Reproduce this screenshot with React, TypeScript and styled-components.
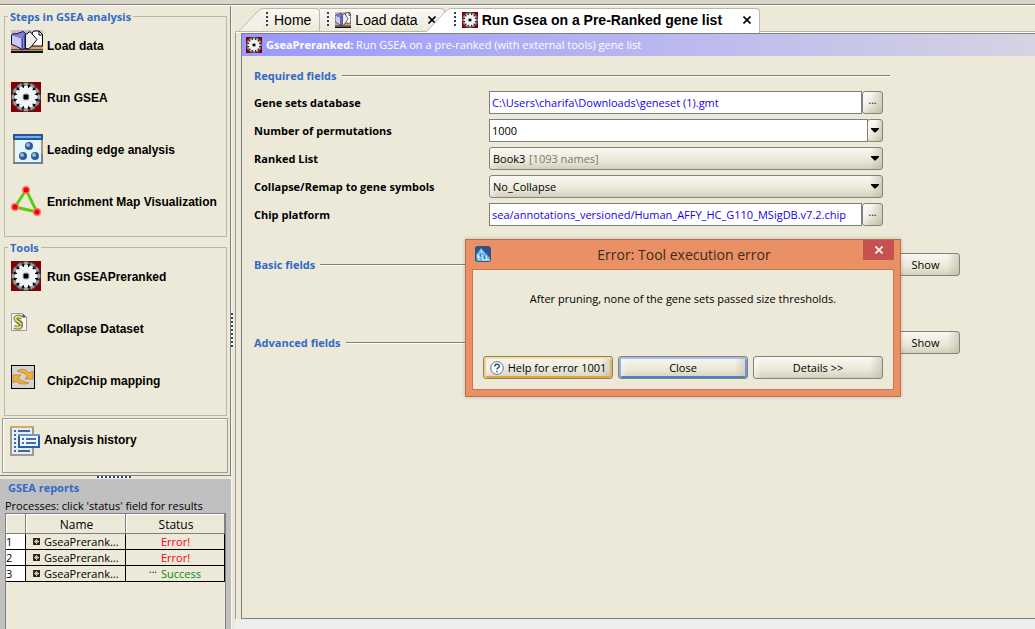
import React from "react";
import styled, { createGlobalStyle, css } from "styled-components";

const BG = "#ece9d8";
const LINE = "#b9b9a8";
const DARK = "#7f7f7f";
const BLUE = "#3169c6";
const UI = `"Open Sans", "Noto Sans", sans-serif`;
const ARIAL = `"Liberation Sans", Arial, sans-serif`;

const Global = createGlobalStyle`
  *, *::before, *::after { box-sizing: border-box; }
  body { margin: 0; background: ${BG}; color: #000; font: 12px/16px ${UI}; }
  button, input, select { font: inherit; color: inherit; margin: 0; }
  h1, h2, p, ul, fieldset { margin: 0; padding: 0; }
  svg { display: block; flex: none; }
`;

const Page = styled.div`
  min-height: 100vh;
  display: flex;
  flex-direction: column;
  position: relative;
  overflow: hidden;
`;
const TopStrip = styled.div`
  height: 5px;
  background: #dad6c8;
  border-bottom: 1px solid ${DARK};
`;
const Columns = styled.div`
  flex: 1;
  display: flex;
  border-top: 1px solid #fff;
`;
const Sidebar = styled.aside`
  flex: none;
  width: 231px;
  display: flex;
  flex-direction: column;
`;
const Steps = styled.div`
  display: flex;
  flex-direction: column;
  border: solid ${DARK};
  border-width: 0 1px 1px 0;
  padding: 10px 2px 2px 2px;
`;
const Group = styled.section`
  margin: 0 1px 10px 2px;
  border: 1px solid ${LINE};
`;
const Title = styled.h2`
  display: table;
  margin: -8px 0 5px 3px;
  padding: 0 2px;
  background: ${BG};
  color: ${BLUE};
  font: bold 11px/16px ${UI};
`;
const Tool = styled.button<{ $boxed?: boolean }>`
  display: flex;
  align-items: flex-start;
  width: 100%;
  height: 52px;
  border: 0;
  padding: ${(p) => (p.$boxed ? "7px 0 0 7px" : "0 0 0 6px")};
  background: none;
  text-align: left;
  font: bold 12px/${(p) => (p.$boxed ? 28 : 32)}px ${ARIAL};
  &:last-child { height: 50px; }
`;
const ToolIcon = styled.span<{ $boxed?: boolean }>`
  width: ${(p) => (p.$boxed ? 34 : 36)}px;
  flex: none;
`;
const History = styled.div`
  margin-top: -8px;
  border: 1px solid #9c9c90;
  box-shadow: inset 1px 1px 0 #fff;
  height: 55px;
`;
const GripH = styled.div`
  height: 3px;
  padding-left: 97px;
  &::before {
    content: "";
    display: block;
    width: 35px;
    height: 2px;
    background: repeating-linear-gradient(90deg, #29406b 0 2px, #fff 2px 4px);
  }
`;
const Reports = styled.section`
  flex: 1;
  display: flex;
  flex-direction: column;
  background: #c0c0c0;
  padding: 1px 5px 0;
`;
const ReportTitle = styled.h2`
  padding-left: 3px;
  color: ${BLUE};
  font: bold 11px/16px ${UI};
`;
const ReportNote = styled.p`
  font-size: 11px;
  line-height: 15px;
  padding: 2px 0 0;
`;
const TableBox = styled.div`
  flex: 1;
  border: 1px solid ${DARK};
  border-bottom: 0;
  background: ${BG};
`;
const Table = styled.table`
  border-collapse: separate;
  border-spacing: 0;
  table-layout: fixed;
  width: 100%;
  font: 11px/15px ${UI};
  th, td { padding: 0; height: 16px; border: solid #000; border-width: 0 1px 1px 0; white-space: nowrap; }
  th { height: 20px; padding: 2px 0 0 2px; font-weight: normal; font-size: 12px; border-color: ${DARK}; box-shadow: inset 1px 1px 0 #fff; }
`;
const Num = styled.td`
  background: #fff;
`;
const NameCell = styled.div`
  display: flex;
  align-items: center;
  gap: 4px;
  padding-left: 7px;
`;
const Status = styled.td<{ $ok?: boolean }>`
  color: ${(p) => (p.$ok ? "#0a8a0a" : "#f5001d")};
`;
const StatusInner = styled.div`
  display: grid;
  grid-template-columns: 35px 1fr;
  line-height: 15px;
`;
const Dots = styled.span`
  color: #000;
  text-align: right;
  padding-right: 4px;
  font-size: 10px;
  line-height: 6px;
`;
const Splitter = styled.div`
  flex: none;
  width: 4px;
  background: linear-gradient(90deg, #f6f5ec 1px, ${BG} 1px);
  padding-top: 307px;
  &::before {
    content: "";
    display: block;
    width: 2px;
    height: 35px;
    background: repeating-linear-gradient(#29406b 0 2px, #fff 2px 4px);
  }
`;
const Main = styled.main`
  flex: 1;
  min-width: 0;
  display: flex;
  flex-direction: column;
`;
const Tabs = styled.nav`
  display: flex;
  align-items: flex-start;
  height: 26px;
  padding: 2px 0 0 4px;
  border-bottom: 1px solid ${LINE};
`;
const TabShell = styled.div<{ $active?: boolean }>`
  display: flex;
  position: relative;
  height: ${(p) => (p.$active ? 25 : 23)}px;
  margin-left: ${(p) => (p.$active ? -18 : 0)}px;
  font: ${(p) => (p.$active ? "bold" : "normal")} 14px/22px ${ARIAL};
`;
const TabFace = styled.div<{ $active?: boolean; $slope?: boolean }>`
  display: flex;
  align-items: flex-start;
  border: solid ${LINE};
  border-width: 1px 1px 0 0;
  border-radius: 0 4px 0 0;
  padding: ${(p) => (p.$slope ? "0 8px 0 3px" : "0 8px 0 7px")};
  background: ${(p) => (p.$active ? "#fff" : `linear-gradient(#faf9f4, ${BG})`)};
`;
const Grip = styled.span`
  width: 2px;
  height: 14px;
  margin: 3px 6px 0 0;
  background: repeating-linear-gradient(#29406b 0 2px, transparent 2px 4px);
`;
const TabLabel = styled.button`
  display: flex;
  align-items: center;
  gap: 4px;
  border: 0;
  padding: 0;
  background: none;
  white-space: nowrap;
`;
const TabClose = styled.button<{ $active?: boolean }>`
  border: 0;
  padding: 7px 0;
  margin-left: ${(p) => (p.$active ? 21 : 10)}px;
  background: none;
`;
const Frame = styled.div`
  flex: 1;
  display: flex;
  border-left: 1px solid #9c9c90;
  padding-left: 5px;
  background: ${BG};
  border-top: 1px solid #fff;
`;
const Sheet = styled.div`
  flex: 1;
  min-width: 0;
  border: solid ${DARK};
  border-width: 1px 0 1px 1px;
`;
const Bottom = styled.div`
  height: 10px;
  background: #eeeeee;
`;
const Banner = styled.h1`
  display: flex;
  align-items: center;
  height: 22px;
  padding-left: 4px;
  gap: 4px;
  color: #fff;
  font: 11px/22px ${UI};
  background: linear-gradient(90deg, #9999ff, #d6d3e2);
`;
const Form = styled.form`
  max-width: 718px;
  padding: 8px 0 0 12px;
`;
const Section = styled.div<{ $gap: number; $inset?: boolean }>`
  display: flex;
  align-items: center;
  gap: 5px;
  height: 23px;
  margin-top: ${(p) => p.$gap}px;
  padding-right: ${(p) => (p.$inset ? 70 : 0)}px;
`;
const SectionTitle = styled.h2`
  color: ${BLUE};
  font: bold 11px/16px ${UI};
  white-space: nowrap;
`;
const Rule = styled.span`
  flex: 1;
  height: 2px;
  border-top: 1px solid ${DARK};
  background: #fff;
`;
const Fields = styled.div`
  display: grid;
  grid-template-columns: 235px 394px;
  row-gap: 5px;
  margin-top: 4px;
`;
const Label = styled.label`
  font: bold 11px/23px ${UI};
`;
const Control = styled.div`
  display: flex;
  height: 23px;
`;
const button = css`
  border: 1px solid #838378;
  border-radius: 3px;
  background: linear-gradient(90deg, #fff8 0, transparent 8px calc(100% - 12px), #b5b29a88 100%),
    linear-gradient(#f9f8f3, #e9e6d6 65%, #d2cfbd);
`;
const Input = styled.input<{ $path?: boolean }>`
  flex: 1;
  min-width: 0;
  border: 1px solid ${DARK};
  border-radius: 0;
  padding: 0 2px;
  background: #fff;
  color: ${(p) => (p.$path ? "#1500f0" : "#000")};
  font-size: 11px;
  outline: 0;
`;
const Browse = styled.button`
  ${button}
  flex: none;
  width: 21px;
  padding: 0 0 6px;
  font-size: 10px;
  line-height: 14px;
`;
const Drop = styled.button`
  ${button}
  flex: none;
  width: 16px;
  margin-left: -1px;
  padding: 0 3px;
`;
const SelectBox = styled.div`
  flex: 1;
  display: grid;
  grid-template-columns: 1fr 20px;
  align-items: center;
`;
const Select = styled.select`
  ${button}
  grid-area: 1 / 1 / 2 / 3;
  height: 23px;
  width: 100%;
  padding: 0 3px;
  appearance: none;
  font-size: 11px;
`;
const Hint = styled.span`
  grid-area: 1 / 1;
  padding-left: 40px;
  color: #77776c;
  font-size: 11px;
  pointer-events: none;
`;
const Caret = styled.span`
  grid-area: 1 / 2;
  padding-left: 8px;
  pointer-events: none;
`;
const Push = styled.button<{ $tone?: "gold" | "blue"; $wide?: boolean }>`
  ${button}
  height: 23px;
  ${(p) => (p.$wide ? "flex: 1;" : "width: 69px; flex: none;")}
  display: flex;
  align-items: center;
  justify-content: center;
  gap: 4px;
  padding: 0;
  font-size: 11px;
  line-height: 16px;
  white-space: nowrap;
  ${(p) => p.$tone === "gold" && "box-shadow: inset 0 2px #fbdd9c, inset 2px 0 #f5cf83, inset -2px 0 #e6b35a, inset 0 -2px #e9a42d;"}
  ${(p) => p.$tone === "blue" && "box-shadow: inset 0 2px #a9c0ea, inset 2px 0 #93b0e0, inset -2px 0 #7298d6, inset 0 -2px #4f7ecb;"}
`;
const Dialog = styled.section`
  position: absolute;
  left: 465px;
  top: 239px;
  width: 436px;
  border: 1px solid #b86f4d;
  background: #e99065;
  padding: 0 6px 6px;
  box-shadow: 0 0 4px #0003;
`;
const DialogHead = styled.header`
  display: grid;
  grid-template-columns: 30px 1fr 31px;
  height: 29px;
  padding-left: 3px;
`;
const DialogIcon = styled.span`
  padding-top: 6px;
`;
const DialogTitle = styled.h2`
  text-align: center;
  font: 14px/30px ${UI};
  color: #3b2a22;
`;
const DialogClose = styled.button`
  width: 31px;
  height: 20px;
  border: 0;
  padding: 0 12px;
  background: #c75050;
`;
const DialogBody = styled.div`
  border: 1px solid #c87850;
  background: ${BG};
  padding: 21px 10px 10px;
`;
const Message = styled.p`
  text-align: center;
  font-size: 11px;
  line-height: 16px;
`;
const Actions = styled.div`
  display: flex;
  gap: 5px;
  margin-top: 49px;
`;

const TWELFTHS = Array.from({ length: 12 }, (_, i) => i * 30);
const GearIcon = ({ size }: { size: number }) => (
  <svg width={size} height={size} viewBox="0 0 30 30" aria-hidden="true">
    <rect width="30" height="30" fill="#850005" />
    <g fill="#a6a6a6" stroke="#4a4a4a">
      {TWELFTHS.map((a) => (
        <rect key={a} x="12" y=".5" width="6" height="6" rx="2" transform={`rotate(${a} 15 15)`} />
      ))}
    </g>
    <circle cx="15" cy="15" r="12.500" fill="#8f8f8f" />
    <g fill="#0c0c0c">
      {TWELFTHS.map((a) => (
        <rect key={a} x="13.500" y="2.500" width="3" height="4" rx="1" transform={`rotate(${a + 15} 15 15)`} />
      ))}
    </g>
    <g fill="#f0f6f7">
      {TWELFTHS.map((a) => (
        <rect key={a} x="13" y="3.500" width="4" height="5" rx="1.500" transform={`rotate(${a} 15 15)`} />
      ))}
      <circle cx="15" cy="15" r="9.500" />
    </g>
    <circle cx="15" cy="15" r="4" fill="#ccd4d8" />
    <rect x="12.500" y="12.500" width="5" height="5" rx="1" fill="#000" />
  </svg>
);
const BooksIcon = ({ small }: { small?: boolean }) => (
  <svg width={small ? 16 : 32} height={small ? 16 : 23} viewBox="0 0 32 23" preserveAspectRatio="none" aria-hidden="true">
    <rect width="32" height="17" fill="#cbb9cc" />
    <rect y="16" width="32" height="4" fill="#e0a06c" />
    <rect y="19" width="32" height="1" fill="#6d4a34" />
    <rect y="20" width="32" height="2" fill="#8d8d8d" />
    <rect y="21" width="32" height="2" fill="#111" />
    <path d="M21 3l2-2h5l3.500 3.500V16H21z" fill="#fff" stroke="#000" />
    <path d="M28 1v4h3" fill="none" stroke="#000" />
    <path d="M14 5l5-3.500 7 8L20 17l-3 2-3-1z" fill="#ececec" stroke="#000" />
    <path d="M.5 5L3 3.500 5 4l7-2.500 2.500 2V18L11 19.500 5 16 .5 14.500z" fill="#8080d0" stroke="#111136" />
    <path d="M1 5.500l9 3V18l-5-2.500-4-2z" fill="#c9c9ff" />
    <path d="M11 8l3-4v13.500L11 19z" fill="#4c4c9e" />
    <path d="M12.500 7v11" stroke="#9a9ae6" strokeWidth=".8" />
  </svg>
);
const LeadingIcon = () => (
  <svg width="32" height="30" viewBox="0 0 32 30" aria-hidden="true">
    <rect x="3" y="1" width="28" height="28" fill="#e6f4fc" stroke="#6d7f9c" strokeWidth="2" />
    <path d="M3 5v23M31 6v14" stroke="#a39a7c" strokeWidth="2" />
    <rect x="2" width="30" height="6" fill="#2a5595" />
    <rect x="4" y="2" width="26" height="2" fill="#6eb0e8" />
    {[[18, 12], [12, 22], [24, 22]].map(([x, y]) => (
      <g key={x}>
        <circle cx={x} cy={y} r="4" fill="#2e5c98" />
        <circle cx={x - 1} cy={y - 1} r="2" fill="#8db9e4" />
      </g>
    ))}
  </svg>
);
const MapIcon = () => (
  <svg width="30" height="31" viewBox="0 0 30 31" aria-hidden="true">
    <path d="M15 4L26 26L4 21z" fill="none" stroke="#5fcb0b" strokeWidth="3" />
    {[[15, 4], [26, 26], [4, 21]].map(([x, y]) => (
      <g key={x}>
        <circle cx={x} cy={y} r="4" fill="#ff6a6a" />
        <circle cx={x} cy={y} r="2.500" fill="#f00000" />
      </g>
    ))}
  </svg>
);
const ScrollIcon = () => (
  <svg width="16" height="18" viewBox="0 0 16 18" aria-hidden="true">
    <path d="M.5.5h11l4 4v13H.5z" fill="#f6f6f2" stroke="#999" />
    <path d="M11.500.5v4h4z" fill="#555" />
    <path d="M11 5c-4-3-8-1-6 2s5 2 5 5-3 3-7 2" fill="none" stroke="#77773a" strokeWidth="4" />
    <path d="M11 5c-4-3-8-1-6 2s5 2 5 5-3 3-7 2" fill="none" stroke="#e6e070" strokeWidth="2" />
    <path d="M6 5l6 5M5 9l6 4" stroke="#55553a" strokeWidth=".8" />
  </svg>
);
const ChipIcon = () => (
  <svg width="24" height="24" viewBox="0 0 24 24" aria-hidden="true">
    <rect x=".5" y=".5" width="23" height="23" fill="#d3d3d6" stroke="#000" />
    <path d="M6 6c5-3 9-2 12 2l4-2v8h-8l2.500-3C14 8 10 7 6 6z" fill="#f0b03a" stroke="#b98226" strokeWidth=".8" />
    <path d="M18 18c-5 2-10 1-13-2l-3 2v-8h8l-3 3C10 16 14 17 18 18z" fill="#f0b03a" stroke="#b98226" strokeWidth=".8" />
  </svg>
);
const HistoryIcon = () => (
  <svg width="30" height="30" viewBox="0 0 30 30" aria-hidden="true">
    <rect x="1" y="1" width="22" height="28" fill="#e4edfa" stroke="#a09a86" strokeWidth="2" />
    <path d="M0 1h24" stroke="#c9ad63" strokeWidth="2" />
    <path d="M4 5h2M8 5h12M4 9h2M8 9h4M4 13h2M4 17h2M4 21h2M4 25h2M8 25h12M8 21h4" stroke="#42659f" strokeWidth="2" />
    <rect x="9" y="9" width="20" height="12" fill="#f2f7ff" stroke="#2464a6" strokeWidth="2" />
    <path d="M8 9h22" stroke="#7096cd" strokeWidth="2" />
    <path d="M12 13h2M16 13h10M12 17h2M16 17h10" stroke="#4a6da8" strokeWidth="2" />
  </svg>
);
const AppIcon = () => (
  <svg width="16" height="16" viewBox="0 0 16 16" aria-hidden="true">
    <rect width="16" height="16" rx="3" fill="#2f5288" />
    <path d="M1 9L6 2l9 10v3H2z" fill="#69b7e8" />
    <path d="M6 4l1 3M3 8l1 6M7 9l1 4M11 10l1 4M2 11h4M7 14h7" stroke="#e2f4ff" />
    <path d="M5 8l1 3M9 10l1 3" stroke="#2f6eac" />
  </svg>
);
const ExpandIcon = () => (
  <svg width="7" height="7" viewBox="0 0 7 7" aria-hidden="true">
    <rect width="7" height="7" fill="#33251a" />
    <path d="M3.500 1v5M1 3.500h5M2 2l3 3M5 2L2 5" stroke="#e8dcc2" strokeWidth=".8" />
  </svg>
);
const Cross = ({ color = "#000" }: { color?: string }) => (
  <svg width="8" height="8" viewBox="0 0 8 8" aria-hidden="true">
    <path d="M.5.5l7 7M7.500.5l-7 7" stroke={color} strokeWidth="1.600" />
  </svg>
);
const Arrow = () => (
  <svg width="8" height="5" viewBox="0 0 8 5" aria-hidden="true">
    <path d="M0 0h8v1L4.500 4.500h-1L0 1z" fill="#000" />
  </svg>
);
const HelpIcon = () => (
  <svg width="14" height="14" viewBox="0 0 14 14" aria-hidden="true">
    <circle cx="7" cy="7" r="6.300" fill="#fff" stroke="#5b7290" />
    <path d="M4.800 5.500c0-3 4.500-3 4.500-.3C9.300 7 7 6.800 7 8.600M7 9.800v1.500" fill="none" stroke="#3d4f78" strokeWidth="1.500" />
  </svg>
);
const Slope = ({ active }: { active?: boolean }) => (
  <svg width="24" height={active ? 25 : 23} viewBox={active ? "0 0 24 25" : "0 0 24 23"} aria-hidden="true">
    <path d={active ? "M0 25V23L18 4Q21 .5 24 .5V25z" : "M0 23L18 4Q21 .5 24 .5V23z"} fill={active ? "#fff" : "#f3f1e6"} />
    <path d="M0 23L18 4Q21 .5 24 .5" fill="none" stroke={LINE} />
  </svg>
);

const steps = [
  { label: "Load data", icon: <BooksIcon /> },
  { label: "Run GSEA", icon: <GearIcon size={30} /> },
  { label: "Leading edge analysis", icon: <LeadingIcon /> },
  { label: "Enrichment Map Visualization", icon: <MapIcon /> },
];
const tools = [
  { label: "Run GSEAPreranked", icon: <GearIcon size={30} /> },
  { label: "Collapse Dataset", icon: <ScrollIcon /> },
  { label: "Chip2Chip mapping", icon: <ChipIcon /> },
];
const reports = [{ ok: false }, { ok: false }, { ok: true }];

function ToolList({ items }: { items: typeof steps }) {
  return (
    <>
      {items.map((t) => (
        <Tool key={t.label} type="button">
          <ToolIcon>{t.icon}</ToolIcon>
          {t.label}
        </Tool>
      ))}
    </>
  );
}

function Tab(props: { label: string; icon?: React.ReactNode; slope?: boolean; active?: boolean; closable?: boolean }) {
  const { label, icon, slope, active, closable } = props;
  return (
    <TabShell $active={active}>
      {slope && <Slope active={active} />}
      <TabFace $active={active} $slope={slope}>
        <Grip />
        <TabLabel type="button">
          {icon}
          {label}
        </TabLabel>
        {closable && (
          <TabClose type="button" $active={active} aria-label={`Close ${label}`}>
            <Cross />
          </TabClose>
        )}
      </TabFace>
    </TabShell>
  );
}

export default function App() {
  return (
    <Page>
      <Global />
      <TopStrip />
      <Columns>
        <Sidebar>
          <Steps>
            <Group>
              <Title>Steps in GSEA analysis</Title>
              <ToolList items={steps} />
            </Group>
            <Group>
              <Title>Tools</Title>
              <ToolList items={tools} />
            </Group>
            <History>
              <Tool type="button" $boxed>
                <ToolIcon $boxed>
                  <HistoryIcon />
                </ToolIcon>
                Analysis history
              </Tool>
            </History>
          </Steps>
          <GripH />
          <Reports>
            <ReportTitle>GSEA reports</ReportTitle>
            <ReportNote>Processes: click 'status' field for results</ReportNote>
            <TableBox>
              <Table>
                <colgroup>
                  <col width="20" />
                  <col width="100" />
                  <col />
                </colgroup>
                <thead>
                  <tr>
                    <th />
                    <th>Name</th>
                    <th>Status</th>
                  </tr>
                </thead>
                <tbody>
                  {reports.map((r, i) => (
                    <tr key={i}>
                      <Num>{i + 1}</Num>
                      <td>
                        <NameCell>
                          <ExpandIcon />
                          GseaPrerank...
                        </NameCell>
                      </td>
                      <Status $ok={r.ok}>
                        <StatusInner>
                          <Dots>{r.ok ? "..." : ""}</Dots>
                          {r.ok ? "Success" : "Error!"}
                        </StatusInner>
                      </Status>
                    </tr>
                  ))}
                </tbody>
              </Table>
            </TableBox>
          </Reports>
        </Sidebar>
        <Splitter />
        <Main>
          <Tabs>
            <Tab label="Home" slope />
            <Tab label="Load data" icon={<BooksIcon small />} closable />
            <Tab label="Run Gsea on a Pre-Ranked gene list" icon={<GearIcon size={16} />} slope active closable />
          </Tabs>
          <Frame>
            <Sheet>
              <Banner>
                <GearIcon size={16} />
                <span>
                  <b>GseaPreranked:</b> Run GSEA on a pre-ranked (with external tools) gene list
                </span>
              </Banner>
              <Form>
                <Section $gap={0} $inset>
                  <SectionTitle>Required fields</SectionTitle>
                  <Rule />
                </Section>
                <Fields>
                  <Label htmlFor="db">Gene sets database</Label>
                  <Control>
                    <Input id="db" $path defaultValue="C:\Users\charifa\Downloads\geneset (1).gmt" />
                    <Browse type="button">...</Browse>
                  </Control>
                  <Label htmlFor="perm">Number of permutations</Label>
                  <Control>
                    <Input id="perm" defaultValue="1000" />
                    <Drop type="button" aria-label="Show choices">
                      <Arrow />
                    </Drop>
                  </Control>
                  <Label htmlFor="ranked">Ranked List</Label>
                  <Control>
                    <SelectBox>
                      <Select id="ranked">
                        <option>Book3</option>
                      </Select>
                      <Hint>[1093 names]</Hint>
                      <Caret>
                        <Arrow />
                      </Caret>
                    </SelectBox>
                  </Control>
                  <Label htmlFor="collapse">Collapse/Remap to gene symbols</Label>
                  <Control>
                    <SelectBox>
                      <Select id="collapse">
                        <option>No_Collapse</option>
                      </Select>
                      <Caret>
                        <Arrow />
                      </Caret>
                    </SelectBox>
                  </Control>
                  <Label htmlFor="chip">Chip platform</Label>
                  <Control>
                    <Input id="chip" $path defaultValue="sea/annotations_versioned/Human_AFFY_HC_G110_MSigDB.v7.2.chip" />
                    <Browse type="button">...</Browse>
                  </Control>
                </Fields>
                <Section $gap={27}>
                  <SectionTitle>Basic fields</SectionTitle>
                  <Rule />
                  <Push type="button">Show</Push>
                </Section>
                <Section $gap={55}>
                  <SectionTitle>Advanced fields</SectionTitle>
                  <Rule />
                  <Push type="button">Show</Push>
                </Section>
              </Form>
            </Sheet>
          </Frame>
          <Bottom />
        </Main>
      </Columns>
      <Dialog role="dialog" aria-labelledby="error-title">
        <DialogHead>
          <DialogIcon>
            <AppIcon />
          </DialogIcon>
          <DialogTitle id="error-title">Error: Tool execution error</DialogTitle>
          <DialogClose type="button" aria-label="Dismiss">
            <Cross color="#fff" />
          </DialogClose>
        </DialogHead>
        <DialogBody>
          <Message>After pruning, none of the gene sets passed size thresholds.</Message>
          <Actions>
            <Push type="button" $wide $tone="gold">
              <HelpIcon />
              Help for error 1001
            </Push>
            <Push type="button" $wide $tone="blue">
              Close
            </Push>
            <Push type="button" $wide>
              Details &gt;&gt;
            </Push>
          </Actions>
        </DialogBody>
      </Dialog>
    </Page>
  );
}
